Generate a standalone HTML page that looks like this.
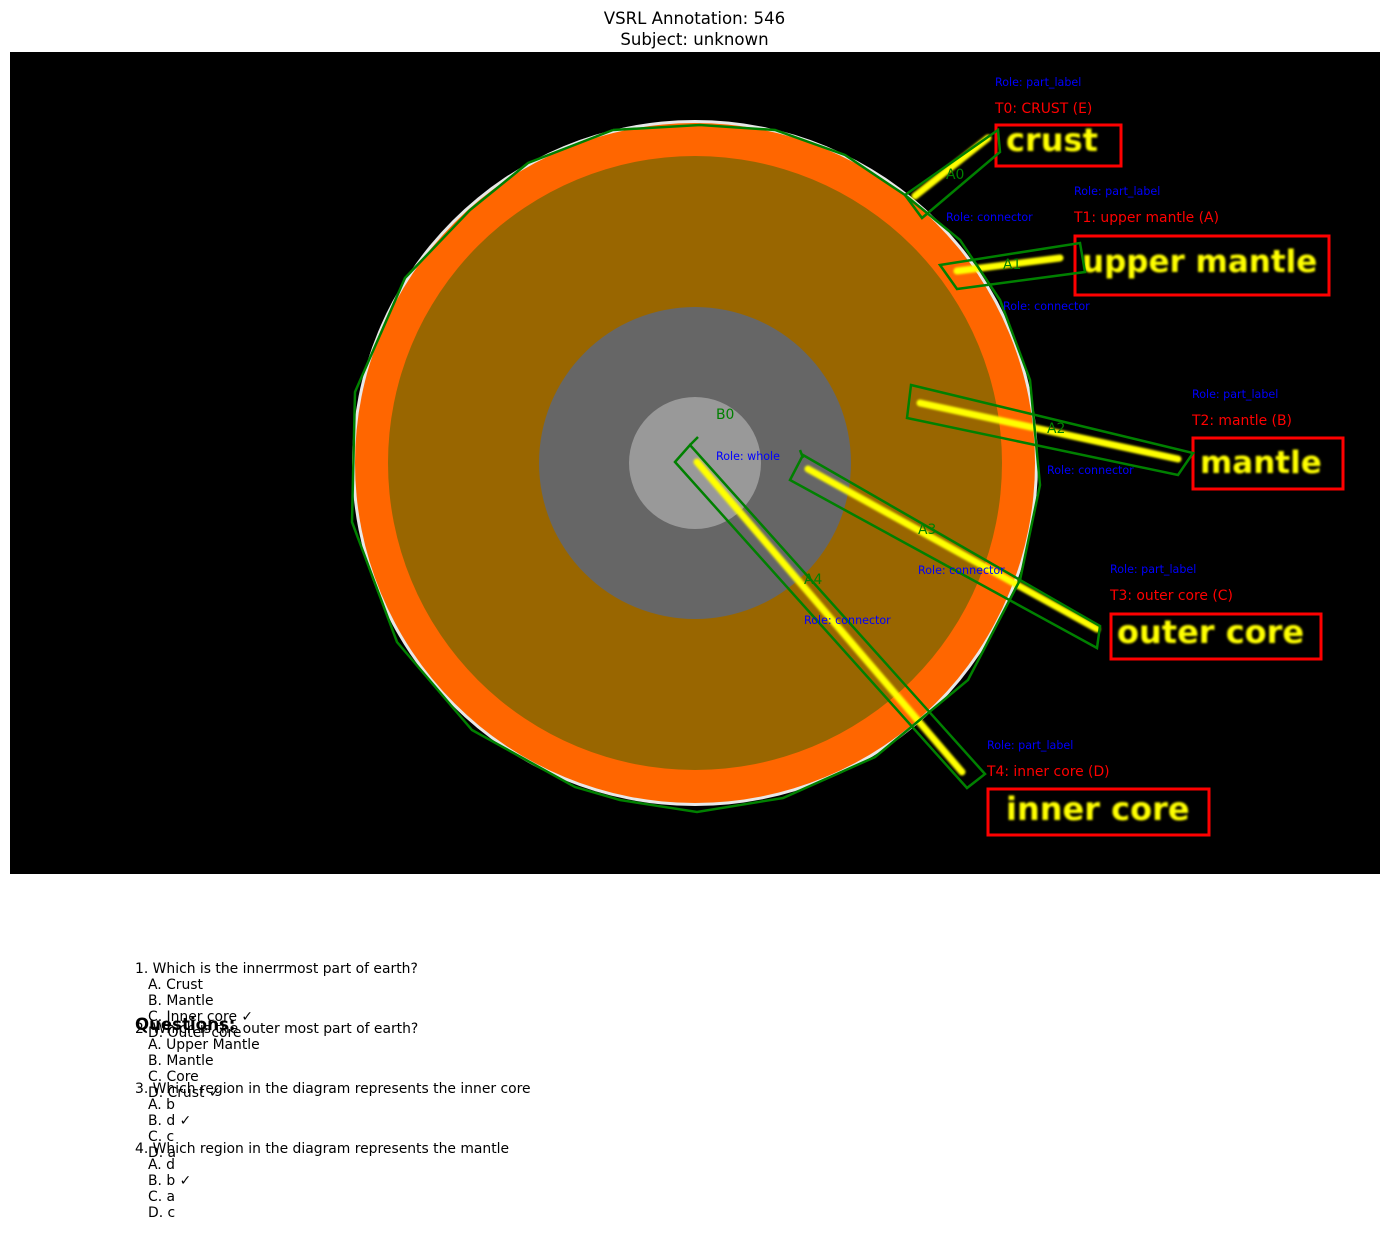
<!DOCTYPE html>
<html><head><meta charset="utf-8"><style>
html,body{margin:0;padding:0;background:#fff;}
svg{display:block;font-family:"DejaVu Sans","Liberation Sans",sans-serif;}
</style></head><body>
<svg width="1389" height="1246" viewBox="0 0 1389 1246" xmlns="http://www.w3.org/2000/svg">
<defs>
<filter id="bl" x="-10%" y="-30%" width="120%" height="160%"><feGaussianBlur stdDeviation="1.1"/></filter>
</defs>
<rect width="1389" height="1246" fill="#fff"/>
<text x="694.5" y="24" font-size="16.6" text-anchor="middle" fill="#000">VSRL Annotation: 546</text>
<text x="694.5" y="45" font-size="16.6" text-anchor="middle" fill="#000">Subject: unknown</text>
<rect x="10" y="52" width="1370" height="822" fill="#000"/>
<circle cx="695" cy="463" r="343" fill="#e8e8e8"/>
<circle cx="695" cy="463" r="340" fill="#ff6600"/>
<circle cx="695" cy="463" r="307" fill="#996600"/>
<circle cx="695" cy="463" r="156" fill="#666666"/>
<circle cx="695" cy="463" r="66" fill="#999999"/>
<g stroke="#ffff00" stroke-width="7" stroke-linecap="round" filter="url(#bl)">
<line x1="915" y1="196" x2="988" y2="138"/>
<line x1="957" y1="271" x2="1060" y2="258"/>
<line x1="920" y1="403" x2="1178" y2="459"/>
<line x1="808" y1="469" x2="1097" y2="629"/>
<line x1="697" y1="462" x2="962" y2="772"/>
</g>
<g fill="#ffff00" font-weight="bold" filter="url(#bl)">
<text x="1006" y="151" font-size="32">crust</text>
<text x="1082" y="272" font-size="31">upper mantle</text>
<text x="1200" y="473" font-size="31">mantle</text>
<text x="1117" y="643" font-size="32">outer core</text>
<text x="1006" y="820" font-size="32">inner core</text>
</g>
<g fill="none" stroke="#ff0000" stroke-width="3">
<rect x="996" y="125" width="125" height="41"/>
<rect x="1075" y="236" width="254" height="59"/>
<rect x="1193" y="438" width="150" height="51"/>
<rect x="1111" y="614" width="210" height="45"/>
<rect x="988" y="789" width="221" height="46"/>
</g>
<g fill="none" stroke="#008000" stroke-width="2.5">
<polyline points="613,130 700,125 775,130 845,155 905,195 960,240 1000,300 1030,380 1040,485 1020,580 968,680 875,757 783,798 697,812 620,800 575,787 472,730 397,642 352,522 355,392 405,278 470,210 528,163 613,130"/>
<polygon points="905,195 998,130 1000,152 922,218"/>
<polygon points="940,265 1080,243 1085,272 957,289"/>
<polygon points="911,385 1193,453 1178,475 907,418"/>
<polygon points="790,480 803,455 1100,626 1097,648"/>
<line x1="800" y1="450" x2="803" y2="458"/>
<polygon points="675,462 690,445 985,774 967,788"/>
<line x1="698" y1="437" x2="690" y2="445"/>
</g>
<g font-size="11.1" fill="#0000ff">
<text x="995" y="86">Role: part_label</text>
<text x="946" y="221">Role: connector</text>
<text x="1074" y="195">Role: part_label</text>
<text x="1003" y="310">Role: connector</text>
<text x="1192" y="398">Role: part_label</text>
<text x="1047" y="474">Role: connector</text>
<text x="716" y="460">Role: whole</text>
<text x="918" y="574">Role: connector</text>
<text x="1110" y="573">Role: part_label</text>
<text x="804" y="624">Role: connector</text>
<text x="987" y="749">Role: part_label</text>
</g>
<g font-size="13.9" fill="#ff0000">
<text x="995" y="113">T0: CRUST (E)</text>
<text x="1074" y="222">T1: upper mantle (A)</text>
<text x="1192" y="425">T2: mantle (B)</text>
<text x="1110" y="600">T3: outer core (C)</text>
<text x="987" y="776">T4: inner core (D)</text>
</g>
<g font-size="13.9" fill="#008000">
<text x="946" y="179">A0</text>
<text x="1003" y="269">A1</text>
<text x="1047" y="433">A2</text>
<text x="716" y="419">B0</text>
<text x="918" y="534">A3</text>
<text x="804" y="584">A4</text>
</g>
<text x="135" y="1030" font-size="16.6" font-weight="bold" fill="#000">Questions:</text>
<g font-size="13.9" fill="#000">
<text x="135" y="973">1. Which is the innerrmost part of earth?</text>
<text x="148" y="989">A. Crust</text>
<text x="148" y="1005">B. Mantle</text>
<text x="148" y="1021">C. Inner core ✓</text>
<text x="148" y="1037">D. Outer core</text>
<text x="135" y="1033">2. Which is the outer most part of earth?</text>
<text x="148" y="1049">A. Upper Mantle</text>
<text x="148" y="1065">B. Mantle</text>
<text x="148" y="1081">C. Core</text>
<text x="148" y="1097">D. Crust ✓</text>
<text x="135" y="1093">3. Which region in the diagram represents the inner core</text>
<text x="148" y="1109">A. b</text>
<text x="148" y="1125">B. d ✓</text>
<text x="148" y="1141">C. c</text>
<text x="148" y="1157">D. a</text>
<text x="135" y="1153">4. Which region in the diagram represents the mantle</text>
<text x="148" y="1169">A. d</text>
<text x="148" y="1185">B. b ✓</text>
<text x="148" y="1201">C. a</text>
<text x="148" y="1217">D. c</text>
</g>
</svg>
</body></html>
